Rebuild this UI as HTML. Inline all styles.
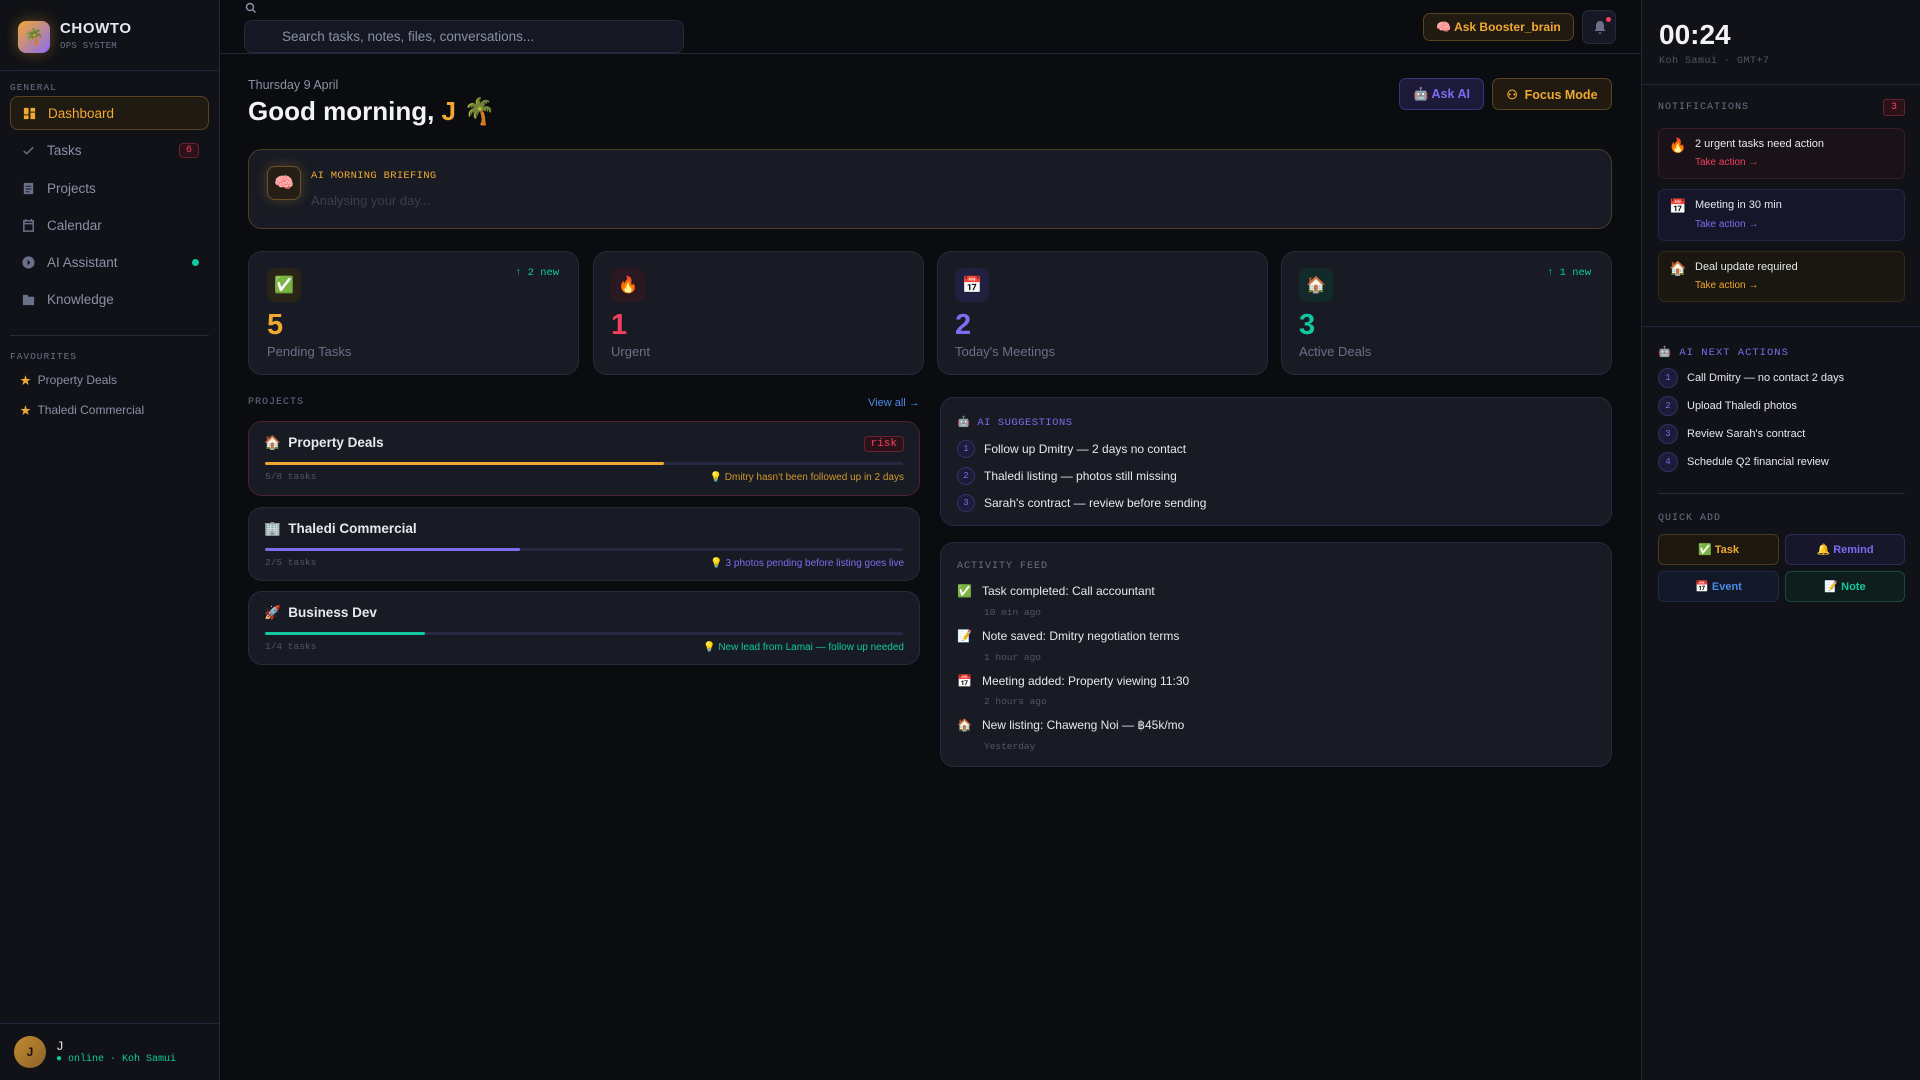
<!DOCTYPE html>
<html><head><meta charset="utf-8"><style>
*{box-sizing:border-box;margin:0;padding:0}
body{width:1920px;height:1080px;background:#0b0c10;font-family:"Liberation Sans","Noto Sans CJK SC",sans-serif;color:#e6e8ef;position:relative;overflow:hidden}
.mono{font-family:"Liberation Mono",monospace}
.abs{position:absolute}
#side{left:0;top:0;width:220px;height:1080px;background:#111217;border-right:1px solid #23263a}
#right{left:1641px;top:0;width:279px;height:1080px;background:#111217;border-left:1px solid #23263a}
.card{position:absolute;background:#181b24;border:1px solid #262a3a;border-radius:14px}
.nav{position:absolute;left:10px;width:199px;height:34px;display:flex;align-items:center;padding-left:11px;font-size:13.5px;color:#8a90a6}
.nav svg{width:15px;height:15px;margin-right:11px}
.lbl{font-family:"Liberation Mono",monospace;font-size:10px;letter-spacing:1px;color:#6a7088}
.num{display:inline-flex;align-items:center;justify-content:center;width:18px;height:18px;border-radius:50%;border:1px solid #34306a;background:#1d1b38;color:#7c6cf0;font-size:9px;font-family:"Liberation Mono",monospace;margin-right:9px}
.bar{position:absolute;left:16px;right:16px;top:40px;height:3px;background:#272842;border-radius:2px}
.bar i{display:block;height:3px;border-radius:2px}
</style></head><body>
<div id="side" class="abs">
 <div class="abs" style="left:18px;top:21px;width:32px;height:32px;border-radius:8px;background:linear-gradient(135deg,#f0a832,#8b6cf0);box-shadow:0 0 14px rgba(240,168,50,.35);display:flex;align-items:center;justify-content:center;font-size:16px">🌴</div>
 <div class="abs" style="left:60px;top:20px;font-size:15px;font-weight:bold;letter-spacing:.6px">CHOWTO</div>
 <div class="abs mono" style="left:60px;top:41px;font-size:9px;color:#6a7088;letter-spacing:.3px">OPS SYSTEM</div>
 <div class="abs" style="left:0;top:70px;width:219px;border-top:1px solid #23263a"></div>
 <div class="abs lbl" style="left:10px;top:82px;font-size:9.5px">GENERAL</div>
 <div class="nav" style="top:96px;background:#1f1a12;border:1px solid #5a4420;border-radius:8px;color:#f0a832"><svg viewBox="0 0 16 16" fill="#f0a832"><rect x="2" y="2" width="5" height="7"/><rect x="9" y="2" width="5" height="4"/><rect x="2" y="10" width="5" height="4"/><rect x="9" y="7" width="5" height="7"/></svg>Dashboard</div>
 <div class="nav" style="top:133px"><svg viewBox="0 0 16 16" fill="none" stroke="#6a7088" stroke-width="1.5"><path d="M3 8.5l3 3 7-7"/></svg>Tasks<span class="mono" style="position:absolute;right:10px;border:1px solid #6a2030;background:#2a1218;color:#f43f5e;font-size:10px;padding:1px 6px;border-radius:4px">6</span></div>
 <div class="nav" style="top:171px"><svg viewBox="0 0 16 16" fill="#6a7088"><path d="M3 2h10v12H3z M5 5h6v1H5z M5 8h6v1H5z M5 11h4v1H5z" fill-rule="evenodd"/></svg>Projects</div>
 <div class="nav" style="top:208px"><svg viewBox="0 0 16 16" fill="none" stroke="#6a7088" stroke-width="1.6"><rect x="3" y="3" width="10" height="11"/><path d="M5 1v3M11 1v3M3 6h10"/></svg>Calendar</div>
 <div class="nav" style="top:245px"><svg viewBox="0 0 16 16"><circle cx="8" cy="8" r="6.5" fill="#6a7088"/><path d="M7 5l3 3-3 3z" fill="#111217"/></svg>AI Assistant<span style="position:absolute;right:10px;width:7px;height:7px;border-radius:50%;background:#10c9a0"></span></div>
 <div class="nav" style="top:282px"><svg viewBox="0 0 16 16" fill="#6a7088"><path d="M2 3h5l1 2h6v9H2z"/></svg>Knowledge</div>
 <div class="abs" style="left:10px;top:335px;width:199px;border-top:1px solid #262a3a"></div>
 <div class="abs lbl" style="left:10px;top:351px;font-size:9.5px">FAVOURITES</div>
 <div class="abs" style="left:20px;top:372px;font-size:12px;color:#8a90a6"><span style="color:#f0a832;font-size:11px">★</span>&nbsp; Property Deals</div>
 <div class="abs" style="left:20px;top:402px;font-size:12px;color:#8a90a6"><span style="color:#f0a832;font-size:11px">★</span>&nbsp; Thaledi Commercial</div>
 <div class="abs" style="left:0;top:1023px;width:219px;border-top:1px solid #23263a"></div>
 <div class="abs" style="left:14px;top:1036px;width:32px;height:32px;border-radius:50%;background:linear-gradient(135deg,#c48a30,#8a6428);color:#1a1208;font-weight:bold;font-size:12px;display:flex;align-items:center;justify-content:center">J</div>
 <div class="abs mono" style="left:56px;top:1039px;font-size:13px;color:#ddd">J</div>
 <div class="abs mono" style="left:56px;top:1054px;font-size:10px;color:#10c9a0">● online · Koh Samui</div>
</div>

<svg class="abs" style="left:245px;top:2px" width="12" height="12" viewBox="0 0 12 12" fill="none" stroke="#8a90a6" stroke-width="1.5"><circle cx="5" cy="5" r="3.5"/><path d="M7.5 7.5l3 3"/></svg>
<div class="abs" style="left:244px;top:20px;width:440px;height:33px;background:#151823;border:1px solid #262a3a;border-radius:8px;font-size:13.5px;color:#8a90a6;padding:8px 0 0 37px">Search tasks, notes, files, conversations...</div>
<div class="abs" style="left:220px;top:53px;width:1421px;border-top:1px solid #23263a"></div>
<div class="abs" style="left:1423px;top:13px;width:151px;height:28px;background:#201a10;border:1px solid #5a4420;border-radius:7px;color:#f0a832;font-weight:bold;font-size:12px;display:flex;align-items:center;justify-content:center">🧠 Ask Booster_brain</div>
<div class="abs" style="left:1582px;top:10px;width:34px;height:34px;background:#161924;border:1px solid #262a3a;border-radius:7px"><svg style="position:absolute;left:10px;top:9px" width="14" height="15" viewBox="0 0 14 15" fill="#6a7088"><path d="M7 1c-3 0-4 2.5-4 5v3l-1.5 2h11L11 9V6c0-2.5-1-5-4-5zM5.5 12.5h3c0 1-.7 1.5-1.5 1.5s-1.5-.5-1.5-1.5z"/></svg><span style="position:absolute;left:23px;top:6px;width:5px;height:5px;border-radius:50%;background:#f43f5e"></span></div>

<div class="abs" style="left:248px;top:78px;font-size:12.5px;color:#8a90a6">Thursday 9 April</div>
<div class="abs" style="left:248px;top:96px;font-size:26px;font-weight:bold;color:#f2f3f7">Good morning, <span style="color:#f0a832">J</span> 🌴</div>
<div class="abs" style="left:1399px;top:78px;width:85px;height:32px;background:#1c1a38;border:1px solid #3a3480;border-radius:7px;color:#7c6cf0;font-weight:bold;font-size:12.5px;display:flex;align-items:center;justify-content:center">🤖 Ask AI</div>
<div class="abs" style="left:1492px;top:78px;width:120px;height:32px;background:#201a10;border:1px solid #5a4420;border-radius:7px;color:#f0a832;font-weight:bold;font-size:12.5px;display:flex;align-items:center;justify-content:center">⚇&nbsp; Focus Mode</div>

<div class="card" style="left:248px;top:149px;width:1364px;height:80px;border-color:#4a3e25"></div>
<div class="abs" style="left:267px;top:166px;width:34px;height:34px;border-radius:8px;background:#241e14;border:1px solid #6a5025;box-shadow:0 0 12px rgba(240,168,50,.25);display:flex;align-items:center;justify-content:center;font-size:16px">🧠</div>
<div class="abs mono" style="left:311px;top:170px;font-size:10.5px;color:#f0a832;letter-spacing:.3px">AI MORNING BRIEFING</div>
<div class="abs" style="left:311px;top:193px;font-size:13px;color:#3a3f52">Analysing your day...</div>

<div class="card" style="left:248px;top:251px;width:331px;height:124px"></div>
<div class="card" style="left:593px;top:251px;width:331px;height:124px"></div>
<div class="card" style="left:937px;top:251px;width:331px;height:124px"></div>
<div class="card" style="left:1281px;top:251px;width:331px;height:124px"></div>
<div class="abs" style="left:267px;top:268px;width:34px;height:34px;border-radius:8px;background:#2a2418;display:flex;align-items:center;justify-content:center;font-size:16px">✅</div>
<div class="abs" style="left:611px;top:268px;width:34px;height:34px;border-radius:8px;background:#2c1820;display:flex;align-items:center;justify-content:center;font-size:16px">🔥</div>
<div class="abs" style="left:955px;top:268px;width:34px;height:34px;border-radius:8px;background:#222040;display:flex;align-items:center;justify-content:center;font-size:16px">📅</div>
<div class="abs" style="left:1299px;top:268px;width:34px;height:34px;border-radius:8px;background:#132a2a;display:flex;align-items:center;justify-content:center;font-size:16px">🏠</div>
<div class="abs mono" style="left:515px;top:267px;font-size:10.5px;color:#10c9a0">↑ 2 new</div>
<div class="abs mono" style="left:1547px;top:267px;font-size:10.5px;color:#10c9a0">↑ 1 new</div>
<div class="abs" style="left:267px;top:309px;font-size:29px;font-weight:bold;color:#f0a832">5</div>
<div class="abs" style="left:611px;top:309px;font-size:29px;font-weight:bold;color:#f43f5e">1</div>
<div class="abs" style="left:955px;top:309px;font-size:29px;font-weight:bold;color:#7c6cf0">2</div>
<div class="abs" style="left:1299px;top:309px;font-size:29px;font-weight:bold;color:#10c9a0">3</div>
<div class="abs" style="left:267px;top:344px;font-size:13px;color:#6a7088">Pending Tasks</div>
<div class="abs" style="left:611px;top:344px;font-size:13px;color:#6a7088">Urgent</div>
<div class="abs" style="left:955px;top:344px;font-size:13px;color:#6a7088">Today's Meetings</div>
<div class="abs" style="left:1299px;top:344px;font-size:13px;color:#6a7088">Active Deals</div>

<div class="abs lbl" style="left:248px;top:397px">PROJECTS</div>
<div class="abs" style="left:868px;top:397px;font-size:11px;color:#4a8ae8">View all →</div>
<div class="card" style="left:248px;top:421px;width:672px;height:75px;border-color:#4a2230">
 <div class="abs" style="left:15px;top:13px;font-size:13.5px;font-weight:bold">🏠&nbsp; Property Deals</div>
 <div class="abs mono" style="right:15px;top:14px;border:1px solid #6a2030;background:#2a1218;color:#f43f5e;font-size:11px;padding:1px 6px;border-radius:4px">risk</div>
 <div class="bar"><i style="width:62.5%;background:#f0a832"></i></div>
 <div class="abs mono" style="left:16px;top:49px;font-size:9.5px;color:#50556a">5/8 tasks</div>
 <div class="abs" style="right:15px;top:50px;font-size:10px;color:#d0962c">💡 Dmitry hasn't been followed up in 2 days</div>
</div>
<div class="card" style="left:248px;top:507px;width:672px;height:74px">
 <div class="abs" style="left:15px;top:13px;font-size:13.5px;font-weight:bold">🏢&nbsp; Thaledi Commercial</div>
 <div class="bar"><i style="width:40%;background:#7c6cf0"></i></div>
 <div class="abs mono" style="left:16px;top:49px;font-size:9.5px;color:#50556a">2/5 tasks</div>
 <div class="abs" style="right:15px;top:50px;font-size:10px;color:#7c6cf0">💡 3 photos pending before listing goes live</div>
</div>
<div class="card" style="left:248px;top:591px;width:672px;height:74px">
 <div class="abs" style="left:15px;top:13px;font-size:13.5px;font-weight:bold">🚀&nbsp; Business Dev</div>
 <div class="bar"><i style="width:25%;background:#10c9a0"></i></div>
 <div class="abs mono" style="left:16px;top:49px;font-size:9.5px;color:#50556a">1/4 tasks</div>
 <div class="abs" style="right:15px;top:50px;font-size:10px;color:#10c9a0">💡 New lead from Lamai — follow up needed</div>
</div>

<div class="card" style="left:940px;top:397px;width:672px;height:129px;border-color:#2a2848">
 <div class="abs mono" style="left:16px;top:17px;font-size:10.5px;color:#7c6cf0;letter-spacing:.5px">🤖 AI SUGGESTIONS</div>
 <div class="abs" style="left:16px;top:42px;font-size:12px;display:flex;align-items:center"><span class="num">1</span>Follow up Dmitry — 2 days no contact</div>
 <div class="abs" style="left:16px;top:69px;font-size:12px;display:flex;align-items:center"><span class="num">2</span>Thaledi listing — photos still missing</div>
 <div class="abs" style="left:16px;top:96px;font-size:12px;display:flex;align-items:center"><span class="num">3</span>Sarah's contract — review before sending</div>
</div>
<div class="card" style="left:940px;top:542px;width:672px;height:225px">
 <div class="abs lbl" style="left:16px;top:18px">ACTIVITY FEED</div>
 <div class="abs" style="left:16px;top:41px;font-size:12px">✅&nbsp;&nbsp;&nbsp;Task completed: Call accountant</div>
 <div class="abs mono" style="left:43px;top:64px;font-size:9.5px;color:#50556a">10 min ago</div>
 <div class="abs" style="left:16px;top:86px;font-size:12px">📝&nbsp;&nbsp;&nbsp;Note saved: Dmitry negotiation terms</div>
 <div class="abs mono" style="left:43px;top:109px;font-size:9.5px;color:#50556a">1 hour ago</div>
 <div class="abs" style="left:16px;top:131px;font-size:12px">📅&nbsp;&nbsp;&nbsp;Meeting added: Property viewing 11:30</div>
 <div class="abs mono" style="left:43px;top:153px;font-size:9.5px;color:#50556a">2 hours ago</div>
 <div class="abs" style="left:16px;top:175px;font-size:12px">🏠&nbsp;&nbsp;&nbsp;New listing: Chaweng Noi — ฿45k/mo</div>
 <div class="abs mono" style="left:43px;top:198px;font-size:9.5px;color:#50556a">Yesterday</div>
</div>

<div id="right" class="abs">
 <div class="abs" style="left:17px;top:19px;font-size:28px;font-weight:bold;color:#f2f3f7">00:24</div>
 <div class="abs mono" style="left:17px;top:56px;font-size:10px;color:#50556a;letter-spacing:.5px">Koh Samui · GMT+7</div>
 <div class="abs" style="left:0;top:84px;width:279px;border-top:1px solid #23263a"></div>
 <div class="abs lbl" style="left:16px;top:102px">NOTIFICATIONS</div>
 <div class="abs mono" style="left:241px;top:99px;width:22px;height:17px;border:1px solid #6a2030;background:#2a1218;color:#f43f5e;font-size:10px;border-radius:3px;text-align:center;line-height:15px">3</div>
 <div class="abs" style="left:16px;top:128px;width:247px;height:51px;background:#1a1219;border:1px solid #3a1c26;border-radius:7px"><div class="abs" style="left:10px;top:8px;font-size:14px">🔥</div><div class="abs" style="left:36px;top:9px;font-size:11px">2 urgent tasks need action</div><div class="abs" style="left:36px;top:28px;font-size:10px;color:#f43f5e">Take action →</div></div>
 <div class="abs" style="left:16px;top:189px;width:247px;height:52px;background:#15162a;border:1px solid #25264a;border-radius:7px"><div class="abs" style="left:10px;top:8px;font-size:14px">📅</div><div class="abs" style="left:36px;top:9px;font-size:11px">Meeting in 30 min</div><div class="abs" style="left:36px;top:29px;font-size:10px;color:#7c6cf0">Take action →</div></div>
 <div class="abs" style="left:16px;top:251px;width:247px;height:51px;background:#19170f;border:1px solid #332a18;border-radius:7px"><div class="abs" style="left:10px;top:8px;font-size:14px">🏠</div><div class="abs" style="left:36px;top:9px;font-size:11px">Deal update required</div><div class="abs" style="left:36px;top:28px;font-size:10px;color:#f0a832">Take action →</div></div>
 <div class="abs" style="left:0;top:326px;width:279px;border-top:1px solid #23263a"></div>
 <div class="abs mono" style="left:16px;top:345px;font-size:10.5px;color:#7c6cf0;letter-spacing:1px">🤖 AI NEXT ACTIONS</div>
 <div class="abs" style="left:16px;top:368px;font-size:11px;display:flex;align-items:center"><span class="num" style="width:20px;height:20px">1</span>Call Dmitry — no contact 2 days</div>
 <div class="abs" style="left:16px;top:396px;font-size:11px;display:flex;align-items:center"><span class="num" style="width:20px;height:20px">2</span>Upload Thaledi photos</div>
 <div class="abs" style="left:16px;top:424px;font-size:11px;display:flex;align-items:center"><span class="num" style="width:20px;height:20px">3</span>Review Sarah's contract</div>
 <div class="abs" style="left:16px;top:452px;font-size:11px;display:flex;align-items:center"><span class="num" style="width:20px;height:20px">4</span>Schedule Q2 financial review</div>
 <div class="abs" style="left:16px;top:493px;width:247px;border-top:1px solid #262a3a"></div>
 <div class="abs lbl" style="left:16px;top:513px">QUICK ADD</div>
 <div class="abs" style="left:16px;top:534px;width:121px;height:31px;background:#1c1810;border:1px solid #4a3a1e;border-radius:6px;color:#f0a832;font-weight:bold;font-size:11px;display:flex;align-items:center;justify-content:center">✅ Task</div>
 <div class="abs" style="left:143px;top:534px;width:120px;height:31px;background:#17162a;border:1px solid #2e2a5a;border-radius:6px;color:#7c6cf0;font-weight:bold;font-size:11px;display:flex;align-items:center;justify-content:center">🔔 Remind</div>
 <div class="abs" style="left:16px;top:571px;width:121px;height:31px;background:#121828;border:1px solid #1e2a48;border-radius:6px;color:#4a8ae8;font-weight:bold;font-size:11px;display:flex;align-items:center;justify-content:center">📅 Event</div>
 <div class="abs" style="left:143px;top:571px;width:120px;height:31px;background:#0f1e1c;border:1px solid #174a3e;border-radius:6px;color:#10c9a0;font-weight:bold;font-size:11px;display:flex;align-items:center;justify-content:center">📝 Note</div>
</div>
</body></html>
